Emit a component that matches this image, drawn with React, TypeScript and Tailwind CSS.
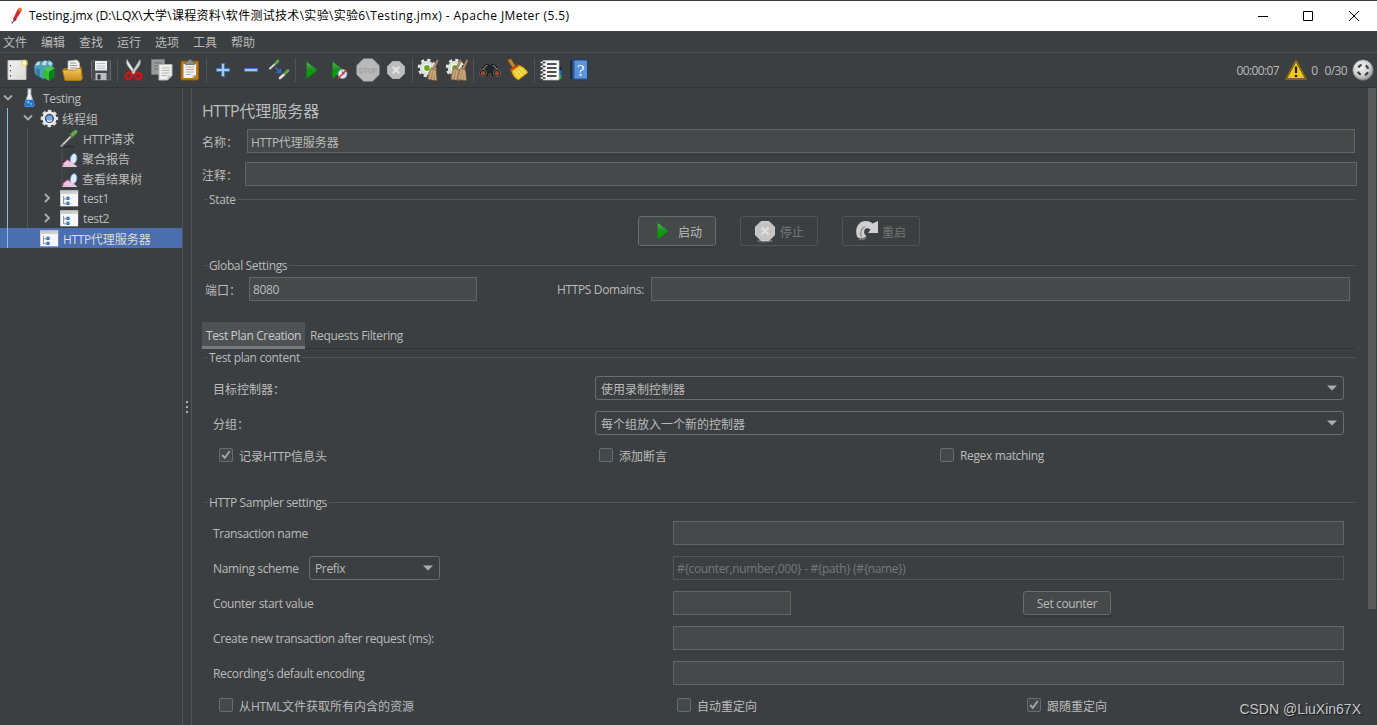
import type { ReactNode } from "react";

const menus = ["文件", "编辑", "查找", "运行", "选项", "工具", "帮助"];

// flex item holding a label, latin runs are set a bit tighter than the chinese ones
function T({ className = "", children }: { className?: string; children: string }) {
    const latin = /^[\x20-\x7e]*$/.test(children);
    return <span className={`whitespace-nowrap ${latin ? "pt-0.5" : "pt-[3px]"} ${className}`}>
        {children.split(/([\x20-\x7e]+)/).filter(Boolean).map((run, i) => (
            /^[\x20-\x7e]/.test(run) ? <span key={i} className="tracking-[-0.03em]">{run}</span> : run
        ))}
    </span>
}

function Svg({ size = 24, children }: { size?: number; children: ReactNode }) {
    return <svg width={size} height={size} viewBox="0 0 24 24" fill="none" className="shrink-0">{children}</svg>
}

function Gradients() {
    return <svg width="0" height="0" className="absolute">
        <defs>
            <linearGradient id="green" x1="0" y1="0" x2="0" y2="1">
                <stop offset="0" stopColor="#5cb863" />
                <stop offset=".48" stopColor="#238a26" />
                <stop offset=".52" stopColor="#06a008" />
                <stop offset="1" stopColor="#0c9a10" />
            </linearGradient>
            <linearGradient id="gold" x1="0" y1="0" x2="0" y2="1">
                <stop offset="0" stopColor="#f3c95a" />
                <stop offset="1" stopColor="#c98d1c" />
            </linearGradient>
            <linearGradient id="paper" x1="0" y1="0" x2="1" y2="1">
                <stop offset="0" stopColor="#f2f2f0" />
                <stop offset="1" stopColor="#d9dad8" />
            </linearGradient>
            <radialGradient id="ball" cx=".4" cy=".35" r=".7">
                <stop offset="0" stopColor="#f6f6f6" />
                <stop offset=".6" stopColor="#cfcfcf" />
                <stop offset="1" stopColor="#8a8a8a" />
            </radialGradient>
        </defs>
    </svg>
}

function NewIcon() {
    return <Svg>
        <path d="M3 2.500h18v19H3z" fill="url(#paper)" stroke="#c4c5c1" />
        <path d="M5.500 7v1.500M5.500 12v1.500M5.500 17v1.500" stroke="#55575a" strokeWidth="1.200" />
        <circle cx="19.500" cy="5" r="3.500" fill="#e9dc5d" opacity=".7" />
        <circle cx="19.500" cy="5" r="1.800" fill="#fffde0" />
    </Svg>
}

function TemplatesIcon() {
    return <Svg>
        <path d="M1 8l6-5 4 1 5-2 4 3-1 12-9 4-8-5z" fill="#4d9dbb" />
        <path d="M2 7.500c1-3 3-5 5-3.500l-.5 3zM9 7c0-4 3-6 5-3.500l-1 4zM15 6c1-3 3-3 4-1l-1 3z" fill="#b9dbe6" />
        <path d="M3 10v7l4 2.500v-8z" fill="#2f7d9c" />
        <path d="M10 11l6 2.500V23l-6-4z" fill="#30c035" />
        <path d="M16 13.500l6-3.500v9L16 23z" fill="#0d7d16" />
        <path d="M10 11l6-3 6 2-6 3.500z" fill="#4fc452" />
    </Svg>
}

function OpenIcon() {
    return <Svg>
        <path d="M2.500 10h6l1-1.500h11l1.500 12-2 2h-15l-2-2z" fill="#a86f0c" />
        <path d="M7 3l9-1 2.500 3v10H7z" fill="#f1f1ef" stroke="#bdbdb8" strokeWidth=".7" />
        <path d="M9 5h6M9 7.500h7.500M9 10h7.500" stroke="#9b9c9a" />
        <path d="M1.500 12h13l2-1.500H20L21 21l-1.500 1.500H4z" fill="url(#gold)" stroke="#b07a14" strokeWidth=".8" />
    </Svg>
}

function SaveIcon() {
    return <Svg>
        <path d="M2.500 3h19v19h-17l-2-2z" fill="#494b4f" stroke="#66686c" />
        <path d="M6 3h12v9.500H6z" fill="#f2f3f4" />
        <path d="M7.500 5.500h9M7.500 8h9M7.500 10.300h9" stroke="#b4c2d2" />
        <path d="M6.500 15h11v7h-11z" fill="#b9bcc0" />
        <path d="M8.500 16.500h3v5h-3z" fill="#33353a" />
    </Svg>
}

function CutIcon() {
    return <Svg>
        <path d="M5 1.500c-1 2-.5 4 .5 6l7 9.500 1.500-1.500z" fill="#e9eaea" stroke="#8f9090" strokeWidth=".6" />
        <path d="M18 1.500c1 2 .5 4-.5 6l-7 9.500L9 15.500z" fill="#cfd1d1" stroke="#8f9090" strokeWidth=".6" />
        <ellipse cx="6.800" cy="18" rx="2.700" ry="3.400" transform="rotate(40 6.800 18)" stroke="#d21317" strokeWidth="2.600" />
        <ellipse cx="16.200" cy="18" rx="2.700" ry="3.400" transform="rotate(-40 16.200 18)" stroke="#d21317" strokeWidth="2.600" />
    </Svg>
}

function CopyIcon() {
    return <Svg>
        <path d="M1.500 1.500h13v15h-13z" fill="#9a9c9b" stroke="#777977" />
        <path d="M4 5h8M4 8h8M4 11h5" stroke="#6f7170" />
        <path d="M9 6.500h13v11l-4.500 4.500H9z" fill="#f0f0ee" stroke="#b8b9b5" />
        <path d="M11.500 10h8M11.500 12.500h8M11.500 15h8M11.500 17.500h5" stroke="#b5b7b4" />
        <path d="M17.500 22v-4.500H22z" fill="#c4c5c2" />
    </Svg>
}

function PasteIcon() {
    return <Svg>
        <rect x="3" y="3" width="17.500" height="19" rx="1.500" fill="#bd7d14" stroke="#8c5906" />
        <path d="M5.500 6h12.500v11l-3.500 3h-9z" fill="#f1f1ef" />
        <path d="M8 9h8M8 11.500h8M8 14h8M8 16.500h5" stroke="#b0b1af" />
        <path d="M14.500 20v-3H18z" fill="#bfc0bd" />
        <path d="M7.500 3.500h2L11 1.500h2l1.500 2h2v3h-9z" fill="#8b8d88" stroke="#55574f" strokeWidth=".7" />
    </Svg>
}

function PlusIcon() {
    return <Svg><path d="M10.500 5.500h3v5h5v3h-5v5h-3v-5h-5v-3h5z" fill="#a5c7f0" stroke="#3a76c6" /></Svg>
}

function MinusIcon() {
    return <Svg><path d="M5.500 10.500h13v3h-13z" fill="#a5c7f0" stroke="#3a76c6" /></Svg>
}

function ToggleIcon() {
    return <Svg>
        <path d="M3 10.500L8 6" stroke="#d4d6d2" strokeWidth="2" strokeLinecap="round" />
        <path d="M8.500 5.500L11 3" stroke="#62a94e" strokeWidth="2.800" strokeLinecap="round" />
        <path d="M13 20l4-3.500" stroke="#e3e5e1" strokeWidth="2.600" strokeLinecap="round" />
        <path d="M18 15.500l3-3" stroke="#62a94e" strokeWidth="2.800" strokeLinecap="round" />
        <path d="M8.500 9.500l4.500 4.500M13.500 10.500v4h-4" stroke="#2f6fd0" strokeWidth="1.500" />
    </Svg>
}

function PlayIcon() {
    return <Svg><path d="M6.500 3.500v17L17.500 12z" fill="url(#green)" stroke="#17761a" strokeWidth=".7" /></Svg>
}

function PlayNoPauseIcon() {
    return <Svg>
        <path d="M4.500 3.500v17L15.500 12z" fill="url(#green)" stroke="#17761a" strokeWidth=".7" />
        <circle cx="14.500" cy="16" r="4.500" fill="#e6edf5" stroke="#7d9cc0" />
        <path d="M14.500 13v3h2.500" stroke="#4d79ad" />
        <path d="M10 20.500L18.500 12" stroke="#d33030" strokeWidth="1.600" />
    </Svg>
}

function StopIcon() {
    return <Svg>
        <path d="M7.500 1h9L23 7.500v9L16.500 23h-9L1 16.500v-9z" fill="#b9b9b9" stroke="#b0b0b0" />
        <text x="12" y="15" textAnchor="middle" fontSize="7" fontWeight="700" fontFamily="Liberation Sans, sans-serif" fill="#a0a0a0">STOP</text>
    </Svg>
}

function ShutdownIcon() {
    return <Svg>
        <path d="M8.500 3.500h7l5 5v7l-5 5h-7l-5-5v-7z" fill="#bdbdbd" stroke="#b0b0b0" />
        <path d="M8.800 8.800l6.400 6.400M15.200 8.800l-6.400 6.400" stroke="#e2e2e2" strokeWidth="2.300" />
    </Svg>
}

function ShutdownGlossIcon() {
    return <Svg>
        <ellipse cx="12" cy="22" rx="8" ry="1.500" fill="#6e7072" />
        <path d="M8 2.500h8l5.500 5.500v8L16 21.500H8L2.500 16V8z" fill="#c4c4c4" stroke="#d0d0d0" />
        <path d="M8.500 8.500l7 7M15.500 8.500l-7 7" stroke="#e2e2e2" strokeWidth="2" />
    </Svg>
}

function Broom({ x = 0 }: { x?: number }) {
    return <g transform={`translate(${x} 0)`}>
        <path d="M19 1.500l1.500 1-4 9-2-1z" fill="#b79468" stroke="#7b5c38" strokeWidth=".5" />
        <path d="M13.500 9.500l4.500 2 1 11-9-1c0-4 1-9 3.500-12z" fill="#b28d60" stroke="#80603c" strokeWidth=".6" />
        <path d="M14 12l-2.500 9M16 12.500l-1.500 9.500M17 13l.5 9" stroke="#d7bb93" strokeWidth=".8" />
    </g>
}

function CogDisc() {
    return <g>
        <circle cx="10" cy="10" r="8" stroke="#e4e6e2" strokeWidth="2.600" strokeDasharray="3.200 3.083" />
        <circle cx="10" cy="10" r="7.300" fill="#dcdedb" />
        <circle cx="10" cy="10" r="4.300" fill="#f5f6f4" />
        <circle cx="10" cy="10" r="2.900" fill="#67ad22" />
    </g>
}

function ClearIcon() {
    return <Svg><CogDisc /><Broom x={1} /></Svg>
}

function ClearAllIcon() {
    return <Svg><CogDisc /><Broom x={-4} /><Broom x={2.500} /></Svg>
}

function SearchIcon() {
    return <Svg>
        <path d="M6 8l3-2 2 1v2h2V7l2-1 3 2 4 7-1 3h-6l-1.500-4h-3L9 18H3l-2-3z" fill="#25262a" stroke="#101114" strokeWidth=".8" />
        <path d="M6.500 8.500l3-1M17.500 8.500l-3-1M4.500 11l3-1.500M19.500 11l-3-1.500" stroke="#888d94" />
        <circle cx="5" cy="15" r="3.600" fill="#1c1d20" stroke="#6d7075" strokeWidth=".8" />
        <circle cx="19" cy="15" r="3.600" fill="#1c1d20" stroke="#6d7075" strokeWidth=".8" />
        <circle cx="5" cy="15.300" r="2.200" fill="#98502b" />
        <circle cx="19" cy="15.300" r="2.200" fill="#98502b" />
    </Svg>
}

function BroomIcon() {
    return <Svg>
        <path d="M1.500 2l3.500-1 4.500 7-2.500 2z" fill="#c68a23" stroke="#8a5a0c" strokeWidth=".7" />
        <path d="M4 11l8.500-5 1 2-8.500 6z" fill="#c9461e" />
        <path d="M5.500 13L13.500 7.500c3 1 6 3 8.500 7L12.500 22c-3.500-1.500-6-4.500-7-9z" fill="#efc927" stroke="#a97f0a" strokeWidth=".7" />
        <path d="M8.500 12.500l5 7M11 11l5.500 7M13.500 9.500l6 6" stroke="#fff0a0" strokeWidth=".9" />
    </Svg>
}

function LogIcon() {
    return <Svg>
        <path d="M19 9h3.500v12H19z" fill="#1769c0" />
        <path d="M19 9h3.500v3H19z" fill="#1a1a1a" />
        <path d="M19 17h3.500v4H19z" fill="#33a333" />
        <path d="M4 2.500h16v19.500H4z" fill="#f7f7f7" stroke="#c0c0c0" strokeWidth=".7" />
        <path d="M8 6h9.500M8 10h9.500M8 14h9.500M8 18h9.500" stroke="#1a1a1a" strokeWidth="1.300" />
        <path d="M4 4.500h2.500M4 8.500h2.500M4 12.500h2.500M4 16.500h2.500M4 20h2.500" stroke="#2e2e2e" strokeWidth="1.300" />
        <path d="M1.500 4.500H4M1.500 8.500H4M1.500 12.500H4M1.500 16.500H4M1.500 20H4" stroke="#e6e6e6" strokeWidth="1.300" />
    </Svg>
}

function HelpIcon() {
    return <Svg>
        <path d="M3.500 3l2-1v20l-2-1z" fill="#16181b" />
        <path d="M5 2h15.500v20H5z" fill="#2a5696" stroke="#1b3c6c" strokeWidth=".8" />
        <path d="M7.500 2.500h12.500v18H7.500z" fill="#5a93de" />
        <text x="13.700" y="17.500" textAnchor="middle" fontSize="17" fontFamily="Liberation Serif, serif" fill="#f4f8ff">?</text>
    </Svg>
}

function WarningIcon() {
    return <Svg>
        <path d="M12 2.500L22 21H2z" fill="#f2c80c" stroke="#7d6612" strokeWidth="1.800" strokeLinejoin="round" />
        <path d="M12 8.500v6.500" stroke="#241d05" strokeWidth="2.200" />
        <circle cx="12" cy="18" r="1.300" fill="#241d05" />
    </Svg>
}

function StatusBall() {
    return <Svg>
        <circle cx="12" cy="12" r="10.300" fill="url(#ball)" stroke="#6c6c6c" strokeWidth=".8" />
        <circle cx="12" cy="12" r="5.300" stroke="#3c3e40" strokeWidth="2.300" strokeDasharray="4 4.325" strokeDashoffset="-2.160" />
    </Svg>
}

function RestartIcon() {
    return <Svg>
        <path d="M2 17.500C-.5 10 3 2 11 2c3 0 5 1 6.500 2.500L23 2v12H13l2.500-3.500C13 8.500 10.500 9 9.500 11c-1 2.500 0 4.500 2 6-3 3.500-7 3.500-9.500.5z" fill="#cfcfcf" />
        <path d="M6.500 18c-2-5 0-9 3.500-10.500" stroke="#8b8b8b" strokeWidth="1.300" />
        <path d="M4 19.500c3 1.500 5 1 7-1" stroke="#6f7173" strokeWidth="2" />
    </Svg>
}

function FeatherIcon() {
    return <Svg size={20}>
        <path d="M18.500 2c1.500 1 2 2.500 1 4.500L13 16.500 10.500 18l-.5-3L14.500 5.500c1-2 2.500-3.200 4-3.500z" fill="#d32936" />
        <path d="M18.500 2c1.500 1 2 2.500 1 4.500l-1 1.500-3.500-4c1-1 2-1.800 3.500-2z" fill="#ec7a25" />
        <path d="M10 15l3 1.500-2.500 1.500L8 21" stroke="#7c1f6c" strokeWidth="1.300" />
    </Svg>
}

function FlaskIcon() {
    return <Svg size={20}>
        <path d="M10 1h5M10.800 1.500v6L7 19.500c-.5 1.500.2 2.500 1.500 2.500h8c1.300 0 2-1 1.500-2.500L14.200 7.500v-6" fill="#e7edf4" stroke="#b8c3cf" />
        <path d="M8.500 14h8l2 5.500c.5 1.500-.2 2.800-1.500 2.800H8c-1.300 0-2-1.300-1.500-2.800z" fill="#1e72d2" />
        <circle cx="11" cy="17" r="1.700" fill="#76b5f5" />
        <circle cx="14.500" cy="19" r="1.300" fill="#76b5f5" />
    </Svg>
}

function GearIcon() {
    return <Svg size={20}>
        <circle cx="12.500" cy="12.500" r="8.800" stroke="#dcdcdc" strokeWidth="3.400" strokeDasharray="4 2.911" strokeDashoffset="2" />
        <circle cx="12.500" cy="12.500" r="6.500" stroke="#ebebeb" strokeWidth="4" />
        <circle cx="12.500" cy="12.500" r="4.700" fill="#7ba3d6" stroke="#3a557c" strokeWidth="1.700" />
        <path d="M9.800 14.500a3.400 3.400 0 0 0 5.500.3" stroke="#d8e8fa" strokeWidth="1.500" />
    </Svg>
}

function PipetteIcon() {
    return <Svg size={20}>
        <path d="M5 22.500h13" stroke="#2a2c2d" strokeWidth="1.500" />
        <path d="M3 21.500L14.500 10" stroke="#9b9e9c" strokeWidth="2.600" strokeLinecap="round" />
        <path d="M5 19.500L14 10.500" stroke="#eff1ee" strokeWidth="1.200" />
        <path d="M13 7l4.500 4.500" stroke="#47723a" strokeWidth="2" />
        <path d="M16.500 7.500l3.500-3" stroke="#60a94a" strokeWidth="4.500" strokeLinecap="round" />
    </Svg>
}

function GraphIcon() {
    return <Svg size={20}>
        <path d="M3.500 2v20" stroke="#686b6d" strokeDasharray="1.500 1.500" />
        <path d="M5 21.500v-3l5-4 4 2 6 5z" fill="#f4c4e2" stroke="#dc6cb4" />
        <ellipse cx="17.500" cy="13" rx="3.800" ry="6.200" transform="rotate(12 17.500 13)" fill="#dfeafa" stroke="#6f9edb" />
        <path d="M11 21l3.500-4.500 6 5z" fill="#f4c4e2" />
        <path d="M4 22h17.500" stroke="#e8e8e8" strokeWidth="1.300" />
    </Svg>
}

function ControllerIcon() {
    return <Svg size={20}>
        <path d="M1.500 3h21.500v19H1.500z" fill="#f7f7f7" />
        <path d="M1.500 3h21.500v4H1.500z" fill="#c9c9c9" />
        <path d="M17 4.500v1.200M20.500 4.500v1.200" stroke="#ffffff" />
        <path d="M5.500 9.500V19H9M5.500 13H9" stroke="#7b8085" />
        <path d="M9 10.500h3.500v4H9zM9 16.500h3.500v4H9z" fill="#246ac0" />
        <path d="M8 12.500h5.500M8 18.500h5.500" stroke="#5f98dd" />
    </Svg>
}

const toolbar = [
    [NewIcon, TemplatesIcon, OpenIcon, SaveIcon],
    [CutIcon, CopyIcon, PasteIcon],
    [PlusIcon, MinusIcon, ToggleIcon],
    [PlayIcon, PlayNoPauseIcon, StopIcon, ShutdownIcon],
    [ClearIcon, ClearAllIcon],
    [SearchIcon, BroomIcon],
    [LogIcon, HelpIcon],
];

function Chevron({ open }: { open: boolean }) {
    return <svg width="10" height="10" viewBox="0 0 10 10" fill="none" stroke="#adadad" strokeWidth="1.800" className="shrink-0">
        {open ? <path d="M1 2.500l4 4 4-4" /> : <path d="M3 1l4 4-4 4" />}
    </svg>
}

const tree = [
    { label: "Testing", icon: FlaskIcon, pad: "pl-[3px]", gap: "gap-[6px]", open: true, text: "pl-[4px]" },
    { label: "线程组", icon: GearIcon, pad: "pl-[23px]", gap: "gap-[6px]", open: true, text: "pl-[3px]" },
    { label: "HTTP请求", icon: PipetteIcon, pad: "pl-[59px]", gap: "", text: "pl-[4px]" },
    { label: "聚合报告", icon: GraphIcon, pad: "pl-[59px]", gap: "", text: "pl-[3px]" },
    { label: "查看结果树", icon: GraphIcon, pad: "pl-[59px]", gap: "", text: "pl-[3px]" },
    { label: "test1", icon: ControllerIcon, pad: "pl-[42px]", gap: "gap-[7px]", open: false, text: "pl-[4px]" },
    { label: "test2", icon: ControllerIcon, pad: "pl-[42px]", gap: "gap-[7px]", open: false, text: "pl-[4px]" },
    { label: "HTTP代理服务器", icon: ControllerIcon, pad: "pl-[39px]", gap: "", text: "pl-[4px]", selected: true },
];

function Tree() {
    return <div className="relative w-[182px] shrink-0">
        {tree.map((node, i) => (
            <div key={i} className={`flex h-5 items-center ${node.pad} ${node.selected ? "bg-[#4b6eaf] text-[#dddddd]" : ""}`}>
                <div className={`flex items-center ${node.gap}`}>
                    {node.open !== undefined && <Chevron open={node.open} />}
                    <node.icon />
                </div>
                <T className={node.text}>{node.label}</T>
            </div>
        ))}
        <div className="absolute left-[7px] top-5 h-[140px] w-px bg-[#7cc0f5]" />
        <div className="absolute left-[27px] top-10 h-[100px] w-px bg-[#55585a]" />
    </div>
}

function Field({ className = "", disabled, children = "" }: { className?: string; disabled?: boolean; children?: string }) {
    return <div className={`flex h-6 items-center border pl-[3px] ${disabled ? "border-[#55585a] text-[#777777]" : "border-[#646464] bg-[#45494a]"} ${className}`}>
        <T>{children}</T>
    </div>
}

function Combo({ className = "", children }: { className?: string; children: string }) {
    return <div className={`flex h-6 items-center justify-between rounded-[3px] border border-[#6b6b6b] pl-[5px] pr-[6px] ${className}`}>
        <T>{children}</T>
        <svg width="10" height="6" viewBox="0 0 10 6"><path d="M0 .5h10L5 5.500z" fill="#adadad" /></svg>
    </div>
}

function Legend({ className = "", children }: { className?: string; children: string }) {
    return <div className={`ml-[12px] mr-[22px] flex h-4 items-center gap-[2px] ${className}`}>
        <span className="h-px w-[3px] bg-[#555555]" />
        <T>{children}</T>
        <span className="h-px flex-1 bg-[#555555]" />
    </div>
}

function Check({ checked, className = "", children }: { checked?: boolean; className?: string; children: string }) {
    return <div className={`flex items-center gap-[6px] ${className}`}>
        <span className="flex size-[14px] items-center justify-center rounded-[2px] border border-[#6b6b6b] bg-[#43494a]">
            {checked && <svg width="12" height="12" viewBox="0 0 12 12" fill="none" stroke="#a7a7a7" strokeWidth="1.900"><path d="M2.200 6l2.600 2.800L9.800 2" /></svg>}
        </span>
        <T>{children}</T>
    </div>
}

function StateButton({ icon, disabled, children }: { icon: ReactNode; disabled?: boolean; children: string }) {
    return <div className={`flex h-[30px] w-[78px] items-center gap-[3px] rounded-[3px] border pl-[12px] ${disabled ? "border-[#525456] text-[#777777]" : "border-[#6b6b6b] bg-[#45494a] shadow-[0_2px_0_#35383a]"}`}>
        {icon}
        <T>{children}</T>
    </div>
}

function Proxy() {
    return <div className="relative flex-1">
        <div className="pl-[10px] pt-[9px]">
            <h1 className="mb-2 flex h-6 items-center text-base"><T>HTTP代理服务器</T></h1>
            <div className="flex items-center pr-[22px]">
                <T className="w-[45px] shrink-0">名称：</T>
                <Field className="flex-1">HTTP代理服务器</Field>
            </div>
            <div className="mt-[9px] flex items-center pr-5">
                <T className="w-[43px] shrink-0">注释：</T>
                <Field className="flex-1" />
            </div>
        </div>

        <Legend className="mt-[5px]">State</Legend>
        <div className="ml-[446px] mt-[9px] flex gap-6">
            <StateButton icon={<PlayIcon />}>启动</StateButton>
            <StateButton icon={<ShutdownGlossIcon />} disabled>停止</StateButton>
            <StateButton icon={<RestartIcon />} disabled>重启</StateButton>
        </div>

        <Legend className="mt-[11px]">Global Settings</Legend>
        <div className="mt-1 flex items-center pl-[13px] pr-[27px]">
            <T className="w-[44px]">端口：</T>
            <Field className="w-[228px]">8080</Field>
            <T className="ml-20 w-[94px]">HTTPS Domains:</T>
            <Field className="flex-1" />
        </div>

        <div className="ml-[10px] mr-[22px] mt-[21px] flex h-[27px] border-b border-[#323232]">
            <div className="-mb-px flex w-[103px] items-center justify-center border-b-[3px] border-[#747a80] bg-[#4e5254] pt-0.5 text-[#cccccc]"><T>Test Plan Creation</T></div>
            <div className="flex items-center px-[5px]"><T>Requests Filtering</T></div>
        </div>

        <Legend>Test plan content</Legend>
        <div className="mt-[11px] flex flex-col gap-[11px] pl-[21px] pr-[33px]">
            <div className="flex items-center">
                <T className="w-[382px]">目标控制器：</T>
                <Combo className="flex-1">使用录制控制器</Combo>
            </div>
            <div className="flex items-center">
                <T className="w-[382px]">分组：</T>
                <Combo className="flex-1">每个组放入一个新的控制器</Combo>
            </div>
        </div>
        <div className="mt-[10px] flex h-5 items-center pl-[27px]">
            <Check checked className="w-[380px]">记录HTTP信息头</Check>
            <Check className="w-[341px]">添加断言</Check>
            <Check>Regex matching</Check>
        </div>

        <Legend className="mt-[29px]">HTTP Sampler settings</Legend>
        <div className="mt-[11px] flex flex-col gap-[11px] pl-[21px] pr-[33px]">
            <div className="flex items-center">
                <T className="w-[460px]">Transaction name</T>
                <Field className="flex-1" />
            </div>
            <div className="flex items-center">
                <T className="w-[96px]">Naming scheme</T>
                <Combo className="mr-[233px] w-[131px]">Prefix</Combo>
                <Field className="flex-1" disabled>{"#{counter,number,000} - #{path} (#{name})"}</Field>
            </div>
            <div className="flex items-center">
                <T className="w-[460px]">Counter start value</T>
                <Field className="w-[118px]" />
                <div className="ml-[232px] flex h-6 w-[88px] items-center justify-center rounded-[3px] border border-[#6b6b6b] bg-[#45494a] shadow-[0_2px_0_#35383a]"><T>Set counter</T></div>
            </div>
            <div className="flex items-center">
                <T className="w-[460px]">Create new transaction after request (ms):</T>
                <Field className="flex-1" />
            </div>
            <div className="flex items-center">
                <T className="w-[460px]">Recording's default encoding</T>
                <Field className="flex-1" />
            </div>
        </div>
        <div className="mt-[10px] flex h-5 items-center pl-[27px]">
            <Check className="w-[458px]">从HTML文件获取所有内含的资源</Check>
            <Check className="w-[350px]">自动重定向</Check>
            <Check checked>跟随重定向</Check>
        </div>

        <div className="absolute right-px top-0 h-[521px] w-2 bg-[#565859]" />
        <div className="absolute bottom-[5px] right-[16px] whitespace-nowrap font-['Liberation_Sans',sans-serif] text-[14px] leading-[22px] text-[#c6c7c8] [text-shadow:1px_1px_1px_#17191a]">CSDN @LiuXin67X</div>
    </div>
}

function App() {
    return <div lang="zh-CN" className="flex h-[725px] w-[1377px] flex-col overflow-hidden bg-[#3c3f41] font-['Open_Sans','Noto_Sans_CJK_SC',sans-serif] text-xs leading-4 text-[#bbbbbb]">
        <Gradients />
        <header className="flex h-[31px] shrink-0 items-center border-t border-[#3b3a3e] bg-white text-black">
            <div className="ml-[5px] w-6"><FeatherIcon /></div>
            <span className="whitespace-nowrap">
                Testing.jmx (D:\LQX\
                <span className="tracking-[0.3px]">大学\课程资料\软件测试技术\实验\实验6\</span>
                <span className="tracking-[0.4px]">Testing.jmx) - Apache JMeter (5.5)</span>
            </span>
            <svg width="105" height="12" viewBox="0 0 105 12" fill="none" stroke="#000000" className="ml-auto mr-[16px]">
                <path d="M2 6.500h10M47.500 1.500h9v9h-9zM93 1l10 10M103 1L93 11" />
            </svg>
        </header>

        <nav className="flex h-[22px] shrink-0 items-center gap-[14px] border-b border-[#515151] pl-[3px] pt-0.5">
            {menus.map((m) => <span key={m}>{m}</span>)}
        </nav>

        <div className="flex h-[35px] shrink-0 items-center border-b border-[#323232] pl-[3px]">
            {toolbar.map((group, i) => (
                <div key={i} className="flex items-center">
                    {i > 0 && <span className="mx-0.5 h-6 w-px bg-[#515456]" />}
                    {group.map((Icon, j) => <span key={j} className="flex w-7 justify-center"><Icon /></span>)}
                </div>
            ))}
            <div className="ml-auto flex items-center pr-[2px]">
                <span className="pt-0.5 tracking-[-0.6px]">00:00:07</span>
                <span className="ml-[5px]"><WarningIcon /></span>
                <span className="ml-[3px] pt-0.5 tracking-[-0.6px]">0</span>
                <span className="ml-[7px] mr-[4px] pt-0.5 tracking-[-0.6px]">0/30</span>
                <StatusBall />
            </div>
        </div>

        <main className="flex min-h-0 flex-1">
            <Tree />
            <div className="flex w-[10px] shrink-0 flex-col items-center justify-center gap-[3px] border-x border-[#515456]">
                {[0, 1, 2].map((n) => <span key={n} className="size-0.5 bg-[#adadad]" />)}
            </div>
            <Proxy />
        </main>
    </div>
}

export default App
